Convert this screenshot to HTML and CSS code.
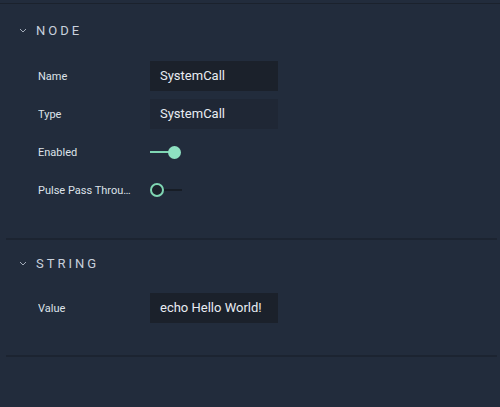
FILE: index.html
```html
<!DOCTYPE html>
<html>
<head>
<meta charset="utf-8">
<link rel="stylesheet" href="styles.css">
</head>
<body>
<div class="topbar"></div>
<section class="section section-first">
  <div class="header">
    <svg class="chev" width="8" height="5" viewBox="0 0 8 5"><polyline points="1,1 4,4 7,1" fill="none" stroke="#a3acb9" stroke-width="1"/></svg>
    <span class="title">NODE</span>
  </div>
  <div class="rows">
    <div class="row"><span class="label">Name</span><div class="input focused">SystemCall</div></div>
    <div class="row"><span class="label">Type</span><div class="input">SystemCall</div></div>
    <div class="row"><span class="label">Enabled</span><div class="switch on"><span class="track"></span><span class="knob"></span></div></div>
    <div class="row"><span class="label">Pulse Pass Through</span><div class="switch off"><span class="knob"></span><span class="track"></span></div></div>
  </div>
</section>
<section class="section section-second">
  <div class="header">
    <svg class="chev" width="8" height="5" viewBox="0 0 8 5"><polyline points="1,1 4,4 7,1" fill="none" stroke="#a3acb9" stroke-width="1"/></svg>
    <span class="title">STRING</span>
  </div>
  <div class="rows">
    <div class="row"><span class="label">Value</span><div class="input focused">echo Hello World!</div></div>
  </div>
</section>
</body>
</html>
```
FILE: styles.css
```css
html, body {
  margin: 0;
  padding: 0;
  background: #222c3c;
  font-family: Roboto, "Liberation Sans", sans-serif;
  width: 500px;
  height: 407px;
  overflow: hidden;
}
.topbar {
  height: 3px;
  border-bottom: 1px solid #1b222d;
}
.section {
  margin: 0 3px 0 6px;
  border-bottom: 2px solid #1c2431;
}
.section-first { padding: 16px 0 33px; }
.section-second { padding: 13px 0 32px; }
.header {
  height: 20px;
  display: flex;
  align-items: center;
  padding-left: 13px;
}
.chev { display: block; margin-right: 9px; margin-top: 1px; }
.title {
  font-size: 13px;
  letter-spacing: 3px;
  color: #c9d1dc;
  font-weight: 400;
}
.rows {
  display: flex;
  flex-direction: column;
  gap: 8px;
  padding-left: 32px;
}
.section-first .rows { margin-top: 21px; }
.section-second .rows { margin-top: 20px; }
.row {
  height: 30px;
  display: flex;
  align-items: center;
}
.label {
  width: 96px;
  margin-right: 16px;
  font-size: 11px;
  color: #dde2e9;
  white-space: nowrap;
  overflow: hidden;
  text-overflow: ellipsis;
}
.input {
  width: 118px;
  height: 30px;
  padding-left: 10px;
  box-sizing: content-box;
  background: #1f2735;
  color: #e8ecf2;
  font-size: 13px;
  line-height: 30px;
}
.input.focused { background: #1b212b; }
.switch {
  display: flex;
  align-items: center;
  height: 14px;
}
.switch .track {
  display: block;
  height: 2px;
}
.switch.on .track {
  width: 20px;
  background: #7fd6b3;
}
.switch.on .knob {
  width: 13px;
  height: 13px;
  border-radius: 50%;
  background: #8ee0c1;
  margin-left: -2px;
}
.switch.off .knob {
  width: 10px;
  height: 10px;
  border-radius: 50%;
  border: 2px solid #7fd6b3;
  background: #1b212b;
}
.switch.off .track {
  width: 18px;
  background: #171d26;
}
```
